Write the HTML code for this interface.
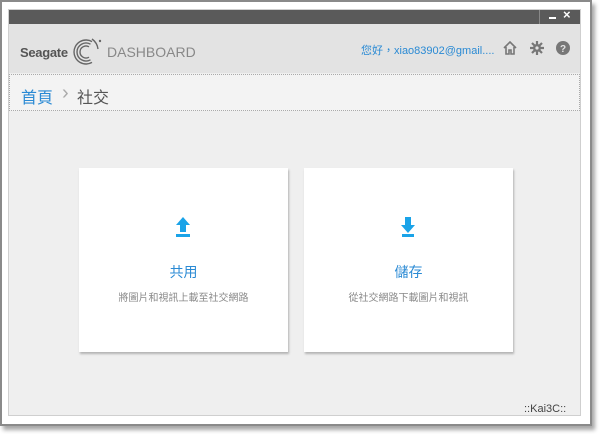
<!DOCTYPE html>
<html><head><meta charset="utf-8"><style>
*{margin:0;padding:0;box-sizing:border-box}
body{width:600px;height:434px;background:#fff;position:relative;overflow:hidden;font-family:"Liberation Sans","Noto Sans CJK TC",sans-serif}
.frame{position:absolute;left:0;top:0;width:592px;height:426px;border:2px solid #8a8a8a;background:#fff;box-shadow:3px 4px 4px rgba(0,0,0,.35)}
.win{position:absolute;left:8px;top:9px;width:573px;height:407px;background:#efefef;border:1px solid #cfcfcf}
.title{position:absolute;left:0;top:0;width:100%;height:14px;background:#5a5a5a}
.title .sep{position:absolute;left:530px;top:0;width:1px;height:14px;background:#888}
.title .min{position:absolute;left:540px;top:7px;width:7px;height:2px;background:#fff}
.title .x{position:absolute;left:554px;top:-3px;color:#fff;font-size:13px;font-weight:bold}
.head{position:absolute;left:0;top:14px;width:100%;height:49px;background:#e3e3e3}
.logo{position:absolute;left:11px;top:21px;font-size:13px;font-weight:bold;color:#555;letter-spacing:-.3px}
.dash{position:absolute;left:98px;top:20px;font-size:14px;color:#888}
.user{position:absolute;left:352px;top:18px;font-size:11px;color:#2a8ad4}
.crumb{position:absolute;left:0;top:64px;width:100%;height:37px;background:#f3f3f3;border:1px dotted #aaa}
.crumb span{position:absolute;top:9px;font-size:16px}
.card{position:absolute;top:158px;width:209px;height:184px;background:#fff;box-shadow:1px 2px 2px rgba(0,0,0,.25)}
.card .t{position:absolute;top:94px;width:100%;text-align:center;font-size:14px;color:#2a8ad4}
.card .d{position:absolute;top:121px;width:100%;text-align:center;font-size:10px;color:#888}
.card svg{position:absolute;left:95px;top:48px}
.kai{position:absolute;left:524px;top:403px;font-size:11px;color:#444}
</style></head><body>
<div class="frame"></div>
<div class="win">
<div class="title"><div class="sep"></div><div class="min"></div><div class="x">×</div></div>
<div class="head">
<div class="logo">Seagate</div>
<svg style="position:absolute;left:62px;top:14px" width="34" height="30" viewBox="0 0 34 30"><g fill="none" stroke="#666" stroke-width="1.4"><path d="M21 3.6A12 12 0 1 0 21 24.4"/><path d="M19.5 6.2A9 9 0 1 0 19.5 21.8"/><path d="M18 8.8A6 6 0 1 0 18 19.2"/><path d="M21 1A14.5 14.5 0 0 1 27 11"/></g><circle cx="29" cy="3" r="1.2" fill="#666"/></svg>
<div class="dash">DASHBOARD</div>
<div class="user">您好，xiao83902@gmail....</div>
<svg style="position:absolute;left:494px;top:17px" width="14" height="14" viewBox="0 0 14 14"><path d="M1 7L7 1l6 6M3 6v7h3V9h2v4h3V6" fill="none" stroke="#777" stroke-width="1.6"/></svg>
<svg style="position:absolute;left:521px;top:17px" width="14" height="14" viewBox="0 0 14 14"><circle cx="7" cy="7" r="4" fill="#777"/><g stroke="#777" stroke-width="2.2"><path d="M7 0v14M0 7h14M2 2l10 10M12 2L2 12"/></g><circle cx="7" cy="7" r="1.6" fill="#e3e3e3"/></svg>
<svg style="position:absolute;left:547px;top:17px" width="14" height="14" viewBox="0 0 14 14"><circle cx="7" cy="7" r="7" fill="#777"/><text x="7" y="11" font-size="10" font-weight="bold" fill="#e3e3e3" text-anchor="middle" font-family="Liberation Sans">?</text></svg>
</div>
<div class="crumb"><span style="left:11px;color:#2a8ad4">首頁</span><span style="left:52px;top:7px;color:#aaa;font-size:20px">›</span><span style="left:67px;color:#555">社交</span></div>
<div class="card" style="left:70px"><svg width="18" height="22" viewBox="0 0 18 22"><path d="M9 1L2 9h4v7h6V9h4z" fill="#1aa3e8"/><rect x="2" y="18" width="14" height="3" fill="#1aa3e8"/></svg><div class="t">共用</div><div class="d">將圖片和視訊上載至社交網路</div></div>
<div class="card" style="left:295px"><svg width="18" height="22" viewBox="0 0 18 22"><path d="M6 1h6v8h4l-7 8-7-8h4z" fill="#1aa3e8"/><rect x="3" y="18" width="12" height="3" fill="#1aa3e8"/></svg><div class="t">儲存</div><div class="d">從社交網路下載圖片和視訊</div></div>
</div>
<div class="kai">::Kai3C::</div>
</body></html>
